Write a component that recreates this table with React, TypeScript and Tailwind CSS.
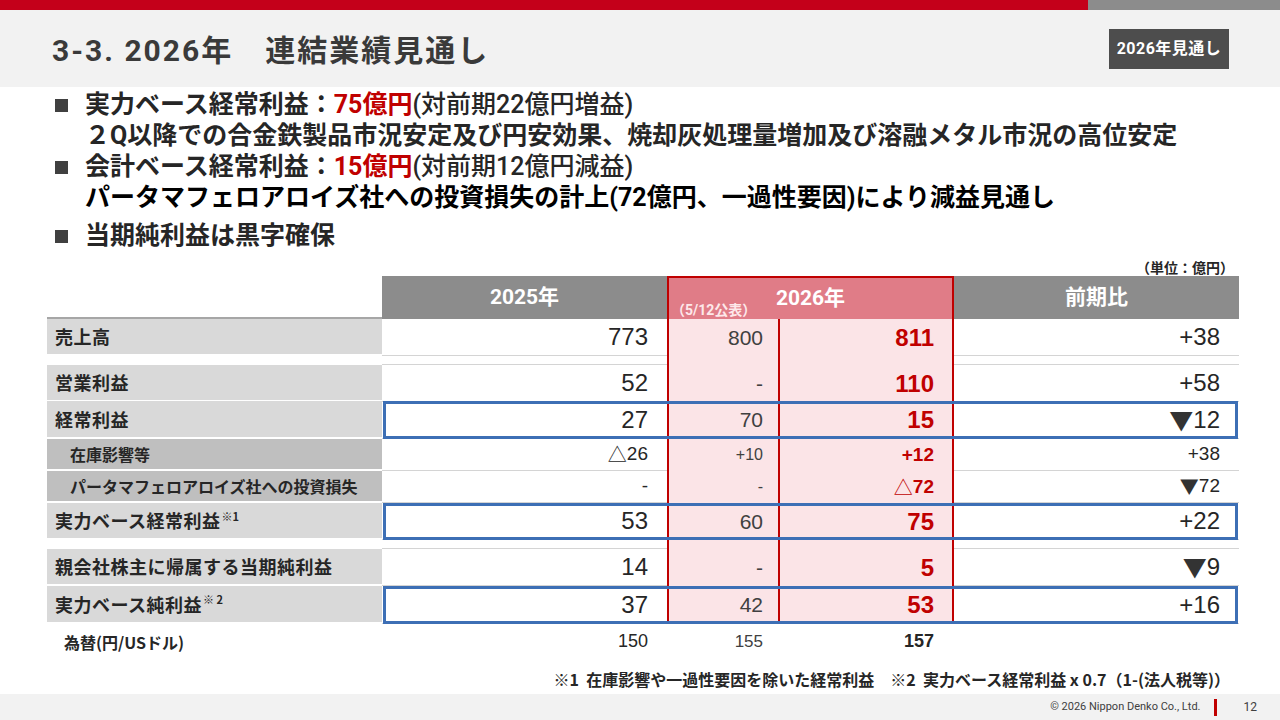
import React from 'react';

const CJK = "font-['Noto_Sans_CJK_JP',sans-serif]";
const NUM = "font-['Liberation_Sans','DejaVu_Sans','Noto_Sans_CJK_JP',sans-serif]";
const COND = "font-['Roboto','Noto_Sans_CJK_JP',sans-serif]";

type Row = {
    label?: string;
    sup?: string;
    values?: string[];
    sub?: boolean;
    box?: boolean;
    gap?: boolean;
    h: string;
};

const rows: Row[] = [
    { label: '売上高', values: ['773', '800', '811', '+38'], h: 'h-[37px]' },
    { gap: true, h: 'h-[9px]' },
    { label: '営業利益', values: ['52', '-', '110', '+58'], h: 'h-[36px]' },
    { label: '経常利益', values: ['27', '70', '15', '▼12'], h: 'h-[38px]', box: true },
    { label: '在庫影響等', values: ['△26', '+10', '+12', '+38'], sub: true, h: 'h-[32px]' },
    { label: 'パータマフェロアロイズ社への投資損失', values: ['-', '-', '△72', '▼72'], sub: true, h: 'h-[32px]' },
    { label: '実力ベース経常利益', sup: '※1', values: ['53', '60', '75', '+22'], h: 'h-[37px]', box: true },
    { gap: true, h: 'h-[9px]' },
    { label: '親会社株主に帰属する当期純利益', values: ['14', '-', '5', '▼9'], h: 'h-[37px]' },
    { label: '実力ベース純利益', sup: '※ 2', values: ['37', '42', '53', '+16'], h: 'h-[38px]', box: true },
];

const GRID = 'grid grid-cols-[335px_285px_113px_174px_285px]';

// triangles come out of the CJK font so they get the full-width shape of the slide
function Num({ text }: { text: string }) {
    const m = text.match(/^([▼△])(.*)$/);
    if (!m) return <>{text}</>;
    return (
        <>
            <span className={`${CJK} font-normal ${m[1] === '▼' ? 'text-[#333333]' : ''}`}>{m[1]}</span>
            {m[2]}
        </>
    );
}

function TableRow({ r }: { r: Row }) {
    if (r.gap) {
        return (
            <div className={`${GRID} ${r.h}`}>
                <div className="bg-white" />
                <div className="border-b border-[#d4d4d4]" />
                <div className="bg-[#fbe4e7] border-l-2 border-r-2 border-[#c00000]" />
                <div className="bg-[#fbe4e7] border-r-2 border-[#c00000]" />
                <div className="border-b border-[#d4d4d4]" />
            </div>
        );
    }
    const v = r.values ?? [];
    const big = r.sub ? 'text-[19px]' : 'text-[24px]';
    return (
        <div className={`relative ${GRID} ${r.h}`}>
            <div
                className={`flex items-center border-b-2 border-white font-bold text-[#262626] ${CJK} ${
                    r.sub ? 'bg-[#bfbfbf] pl-[23px] text-[16px]' : 'bg-[#d9d9d9] pl-[8px] text-[18px] tracking-[0.5px]'
                }`}
            >
                {r.label}
                {r.sup && <sup className="text-[11px] font-bold ml-[1px] -top-[5px] tracking-normal">{r.sup}</sup>}
            </div>
            <div className={`flex items-center justify-end pr-[19px] border-b border-[#d4d4d4] text-[#262626] ${NUM} ${big}`}>
                <Num text={v[0]} />
            </div>
            <div
                className={`flex items-center justify-end pr-[15px] bg-[#fbe4e7] border-l-2 border-r-2 border-[#c00000] text-[#404040] ${NUM} ${
                    r.sub ? 'text-[16px]' : 'text-[21px]'
                }`}
            >
                {v[1]}
            </div>
            <div className={`flex items-center justify-end pr-[18px] bg-[#fbe4e7] border-r-2 border-[#c00000] font-bold text-[#c00000] ${NUM} ${big}`}>
                <Num text={v[2]} />
            </div>
            <div className={`flex items-center justify-end pr-[19px] border-b border-[#d4d4d4] text-[#262626] ${NUM} ${big}`}>
                <Num text={v[3]} />
            </div>
            {r.box && <div className="absolute left-[336px] right-[1px] top-0 bottom-0 border-[3px] border-[#3d6fb5]" />}
        </div>
    );
}

function Bullet() {
    return (
        <span className="w-[30px] shrink-0 pt-[10px]">
            <span className="block w-[13px] h-[13px] bg-[#404040]" />
        </span>
    );
}

export default function App() {
    return (
        <div className={`w-[1280px] h-[720px] bg-white overflow-hidden flex flex-col text-[#262626] ${CJK}`}>
            {/* top strip */}
            <div className="flex h-[10px]">
                <div className="w-[1088px] bg-[#c4001a]" />
                <div className="flex-1 bg-[#8c8c8c]" />
            </div>

            {/* title band */}
            <div className="h-[77px] bg-[#f2f2f2] flex items-center justify-between pl-[52px] pr-[51px]">
                <h1 className={`text-[30px] font-bold text-[#3a3a3a] tracking-[2px] pt-[3px] ${COND}`}>
                    3-3. 2026年　連結業績見通し
                </h1>
                <div className={`w-[120px] h-[40px] bg-[#4d4d4d] flex items-center justify-center text-white font-bold text-[16px] tracking-[0.5px] ${COND}`}>
                    2026年見通し
                </div>
            </div>

            {/* bullets */}
            <div className={`pl-[55px] pt-[2px] text-[25px] font-bold leading-[31px] text-[#262626] ${COND}`}>
                <div className="flex">
                    <Bullet />
                    <div>
                        <p>
                            実力ベース経常利益：<span className="text-[#c00000]">75億円</span>
                            <span className="font-medium">(対前期22億円増益)</span>
                        </p>
                        <p>２Q以降での合金鉄製品市況安定及び円安効果、焼却灰処理量増加及び溶融メタル市況の高位安定</p>
                    </div>
                </div>
                <div className="flex">
                    <Bullet />
                    <div>
                        <p>
                            会計ベース経常利益：<span className="text-[#c00000]">15億円</span>
                            <span className="font-medium">(対前期12億円減益)</span>
                        </p>
                        <p className="text-black">パータマフェロアロイズ社への投資損失の計上(72億円、一過性要因)により減益見通し</p>
                    </div>
                </div>
                <div className="flex mt-[7px]">
                    <Bullet />
                    <p>当期純利益は黒字確保</p>
                </div>
            </div>

            {/* unit */}
            <div className="mt-[8px] h-[17px] leading-[17px] text-right pr-[46px] text-[14px] font-bold">（単位：億円）</div>

            {/* table */}
            <div className="ml-[47px] w-[1192px]">
                <div className={`${GRID} h-[43px]`}>
                    <div className="border-b-2 border-[#a6a6a6]" />
                    <div className={`bg-[#8c8c8c] flex items-center justify-center text-white font-bold text-[21px] ${COND}`}>2025年</div>
                    <div className={`col-span-2 relative bg-[#e07c87] border-t-2 border-l-2 border-r-2 border-[#c00000] flex items-center justify-center text-white font-bold text-[21px] ${COND}`}>
                        2026年
                        <span className="absolute left-[2px] bottom-[0px] text-[14px] text-[#fde8ea] leading-[17px]">（5/12公表）</span>
                    </div>
                    <div className={`bg-[#8c8c8c] flex items-center justify-center text-white font-bold text-[21px] ${COND}`}>前期比</div>
                </div>
                {rows.map((r, i) => (
                    <TableRow key={i} r={r} />
                ))}
                <div className={`${GRID} h-[35px]`}>
                    <div className="flex items-center pl-[17px] text-[16px] font-bold text-[#262626]">為替(円/USドル)</div>
                    <div className={`flex items-center justify-end pr-[19px] text-[18px] ${NUM}`}>150</div>
                    <div className={`flex items-center justify-end pr-[17px] text-[17px] text-[#404040] ${NUM}`}>155</div>
                    <div className={`flex items-center justify-end pr-[20px] text-[18px] font-bold ${NUM}`}>157</div>
                    <div />
                </div>
            </div>

            {/* footnote */}
            <div className="mt-[11px] h-[19px] leading-[19px] text-right pr-[50px] text-[16px] font-bold">
                ※1&nbsp;&nbsp;在庫影響や一過性要因を除いた経常利益　※2&nbsp;&nbsp;実力ベース経常利益 x 0.7（1-(法人税等)）
            </div>

            {/* footer */}
            <div className="mt-auto h-[26px] bg-[#f2f2f2] flex items-center justify-end pr-[23px]">
                <span className={`text-[11px] text-[#404040] ${COND}`}>© 2026 Nippon Denko Co., Ltd.</span>
                <span className="ml-[13px] w-[3px] h-[17px] bg-[#c00000]" />
                <span className={`ml-[27px] text-[12px] text-[#404040] ${COND}`}>12</span>
            </div>
        </div>
    );
}
